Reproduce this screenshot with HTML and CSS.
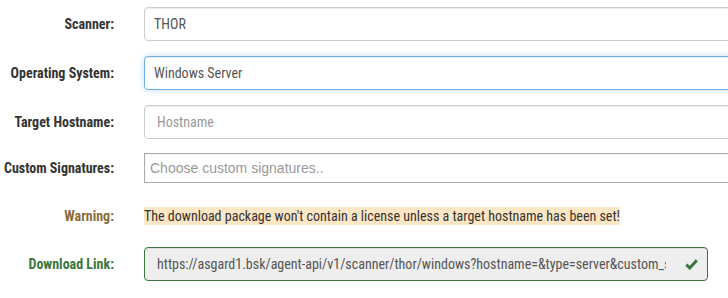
FILE: index.html
```html
<!DOCTYPE html>
<html lang="en">

<head>
    <meta charset="UTF-8">
    <title>Download Agent</title>
    <link rel="stylesheet" href="styles.css">
</head>

<body>
    <form class="form">
        <div class="row">
            <label class="label">Scanner:</label>
            <div class="field">
                <input type="text" class="input" value="THOR">
            </div>
        </div>

        <div class="row">
            <label class="label">Operating System:</label>
            <div class="field">
                <input type="text" class="input input-focus" value="Windows Server">
            </div>
        </div>

        <div class="row">
            <label class="label">Target Hostname:</label>
            <div class="field">
                <input type="text" class="input input-ph" placeholder="Hostname">
            </div>
        </div>

        <div class="row row-sig">
            <label class="label">Custom Signatures:</label>
            <div class="field">
                <div class="chooser">Choose custom signatures..</div>
            </div>
        </div>

        <div class="row row-warn">
            <label class="label label-warn">Warning:</label>
            <div class="field">
                <span class="warn-text">The download package won't contain a license unless a target hostname has been set!</span>
            </div>
        </div>

        <div class="row">
            <label class="label label-ok">Download Link:</label>
            <div class="field field-link">
                <div class="link-box">
                    <span class="link-text">https://asgard1.bsk/agent-api/v1/scanner/thor/windows?hostname=&amp;type=server&amp;custom_signatures=</span>
                    <svg class="check" viewBox="0 0 13 12" width="13" height="12">
                        <polyline points="1.3,6.6 4.8,10 11.8,2.2" fill="none" stroke="#3c763d" stroke-width="3"/>
                    </svg>
                </div>
            </div>
        </div>
    </form>
</body>

</html>
```

FILE: styles.css
```css
* {
    margin: 0;
    padding: 0;
    box-sizing: border-box;
}

body {
    font-family: 'Roboto Condensed', 'Liberation Sans Narrow', 'DejaVu Sans Condensed', sans-serif;
    font-size: 14px;
    color: #333;
    background: #fff;
    overflow: hidden;
}

.form {
    display: flex;
    flex-direction: column;
    gap: 15px;
    padding-top: 7px;
    width: 800px;
}

.row {
    display: grid;
    grid-template-columns: 114px 1fr;
    column-gap: 30px;
    align-items: center;
    height: 34px;
}

.row-sig {
    height: 30px;
    margin-top: -1px;
}

.row-warn {
    height: 18px;
    margin-top: 9px;
    margin-bottom: 7px;
}

.label {
    text-align: right;
    font-weight: bold;
    font-size: 14px;
}

.label-warn {
    color: #8a6d3b;
}

.label-ok {
    color: #3c763d;
}

.input {
    display: block;
    width: 100%;
    height: 34px;
    padding: 6px 9px;
    font-family: inherit;
    font-size: 14px;
    color: #555;
    border: 1px solid #ccc;
    border-radius: 4px;
    box-shadow: inset 0 1px 1px rgba(0, 0, 0, 0.075);
    outline: none;
}

.input-focus {
    border-color: #66afe9;
    box-shadow: inset 0 1px 1px rgba(0, 0, 0, 0.075), 0 0 6px rgba(102, 175, 233, 0.4);
}

.input-ph {
    padding-left: 12px;
}

.input-ph::placeholder {
    color: #999;
}

.chooser {
    height: 30px;
    line-height: 28px;
    padding: 0 5px;
    border: 1px solid #aaa;
    font-family: 'Liberation Sans', Arial, sans-serif;
    font-size: 14px;
    color: #999;
    background: #fff;
    box-shadow: inset 0 1px 2px rgba(0, 0, 0, 0.05);
}

.warn-text {
    background: #fde6c4;
    padding: 1px 0;
}

.field-link {
    width: 564px;
}

.link-box {
    display: flex;
    align-items: center;
    height: 34px;
    padding: 0 9px 0 12px;
    border: 1px solid #3c763d;
    border-radius: 4px;
    background: #eee;
    color: #555;
    box-shadow: inset 0 1px 1px rgba(0, 0, 0, 0.075);
}

.link-text {
    flex: 1;
    white-space: nowrap;
    overflow: hidden;
    margin-right: 19px;
}

.check {
    flex: none;
}
```
